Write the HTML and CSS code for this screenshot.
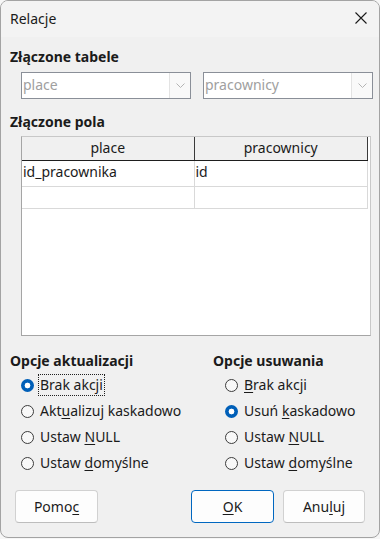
FILE: index.html
```html
<!DOCTYPE html>
<html lang="pl">
<head>
<meta charset="utf-8">
<title>Relacje</title>
<link rel="stylesheet" href="styles.css">
</head>
<body>
<div class="window">
  <div class="titlebar">
    <span class="title">Relacje</span>
    <svg class="close" width="12" height="12" viewBox="0 0 12 12"><path d="M0.5 0.5 L11.5 11.5 M11.5 0.5 L0.5 11.5" stroke="#1a1a1a" stroke-width="1.1" fill="none"/></svg>
  </div>
  <div class="content">
    <div class="heading">Złączone tabele</div>
    <div class="combos">
      <div class="combo"><span class="combo-text">place</span><span class="combo-btn"><svg width="9" height="5" viewBox="0 0 9 5"><path d="M0.5 0.5 L4.5 4.5 L8.5 0.5" stroke="#b4b4b4" fill="none"/></svg></span></div>
      <div class="combo"><span class="combo-text">pracownicy</span><span class="combo-btn"><svg width="9" height="5" viewBox="0 0 9 5"><path d="M0.5 0.5 L4.5 4.5 L8.5 0.5" stroke="#b4b4b4" fill="none"/></svg></span></div>
    </div>
    <div class="heading heading-fields">Złączone pola</div>
    <div class="grid">
      <div class="grid-head">
        <div class="hcell">place</div>
        <div class="hcell">pracownicy</div>
      </div>
      <div class="grid-row row-first">
        <div class="cell">id_pracownika</div>
        <div class="cell">id</div>
      </div>
      <div class="grid-row row-second">
        <div class="cell"></div>
        <div class="cell"></div>
      </div>
    </div>
    <div class="options">
      <div class="group">
        <div class="heading group-title">Opcje aktualizacji</div>
        <div class="radio"><span class="dot on"></span><span class="label focus">Brak akcji</span></div>
        <div class="radio"><span class="dot"></span><span class="label">Akt<u>u</u>alizuj kaskadowo</span></div>
        <div class="radio"><span class="dot"></span><span class="label">Ustaw <u>N</u>ULL</span></div>
        <div class="radio"><span class="dot"></span><span class="label">Ustaw <u>d</u>omyślne</span></div>
      </div>
      <div class="group group-right">
        <div class="heading group-title">Opcje usuwania</div>
        <div class="radio"><span class="dot"></span><span class="label"><u>B</u>rak akcji</span></div>
        <div class="radio"><span class="dot on"></span><span class="label">Usuń <u>k</u>askadowo</span></div>
        <div class="radio"><span class="dot"></span><span class="label">Ustaw <u>N</u>ULL</span></div>
        <div class="radio"><span class="dot"></span><span class="label">Ustaw <u>d</u>omyślne</span></div>
      </div>
    </div>
    <div class="buttons">
      <button class="btn">Pomo<u>c</u></button>
      <span class="spacer"></span>
      <button class="btn btn-default"><u>O</u>K</button>
      <button class="btn">Anu<u>l</u>uj</button>
    </div>
  </div>
</div>
</body>
</html>
```

FILE: styles.css
```css
html, body {
  margin: 0;
  padding: 0;
  background: #f6f6f6;
}
body {
  font-family: "Noto Sans", "Open Sans", sans-serif;
  font-size: 14px;
  color: #1b1b1b;
}
.window {
  box-sizing: border-box;
  width: 380px;
  height: 538px;
  border: 1px solid #a3a3a3;
  border-radius: 8px;
  overflow: hidden;
  background: #f0f0f0;
  display: flex;
  flex-direction: column;
}
.titlebar {
  height: 36px;
  flex: none;
  background: #f3f3f3;
  display: flex;
  align-items: center;
  padding: 0 6px 0 9px;
}
.title {
  flex: 1;
  font-size: 14px;
  line-height: 20px;
  margin-top: 0;
}
.close {
  margin-right: 6px;
  margin-top: -2px;
}
.content {
  flex: 1;
  padding: 10px 0 0 9px;
  display: flex;
  flex-direction: column;
}
.heading {
  font-weight: bold;
  line-height: 20px;
  height: 20px;
}
.combos {
  display: flex;
  gap: 12px;
  margin: 5px 0 0 11px;
}
.combo {
  box-sizing: border-box;
  width: 170px;
  height: 27px;
  border: 1px solid #8a8f98;
  background: #ffffff;
  display: flex;
  align-items: center;
}
.combo-text {
  flex: 1;
  color: #a0a0a0;
  padding-left: 1px;
  line-height: 20px;
  margin-top: -1px;
}
.combo-btn {
  box-sizing: border-box;
  width: 21px;
  height: 25px;
  background: #f9f9f9;
  border-left: 1px solid #e3e3e3;
  display: flex;
  align-items: center;
  justify-content: center;
}
.heading-fields {
  margin-top: 13px;
}
.grid {
  box-sizing: border-box;
  width: 350px;
  height: 200px;
  margin: 4px 0 0 11px;
  border: 1px solid #a5a5a5;
  border-top-color: #c8c8c8;
  border-right-color: #c8c8c8;
  background: #ffffff;
  padding-right: 2px;
}
.grid-head {
  display: flex;
  height: 23px;
  background: #f0f0f0;
  border-bottom: 1px solid #1e1e1e;
}
.hcell {
  box-sizing: border-box;
  line-height: 22px;
  text-align: center;
  border-right: 1px solid #3a3a3a;
}
.hcell:first-child, .cell:first-child {
  width: 173px;
}
.hcell:last-child, .cell:last-child {
  width: 174px;
}
.grid-row {
  display: flex;
  border-bottom: 1px solid #d9d9d9;
}
.row-first { height: 25px; }
.row-second { height: 21px; }
.cell {
  box-sizing: border-box;
  line-height: 22px;
  padding-left: 1px;
  border-right: 1px solid #d9d9d9;
}
.options {
  display: flex;
  margin-top: 15px;
}
.group-title {
  margin-bottom: 1px;
}
.group {
  width: 203px;
}
.group-right {
  width: auto;
}
.radio {
  height: 26px;
  display: flex;
  align-items: center;
  padding-left: 11px;
}
.group-right .radio {
  padding-left: 12px;
}
.dot {
  box-sizing: border-box;
  width: 13px;
  height: 13px;
  border-radius: 50%;
  border: 1px solid #3c3c3c;
  background: #f8f8f8;
  margin-right: 4px;
  flex: none;
}
.dot.on {
  border: none;
  background: radial-gradient(circle, #ffffff 0 2.6px, #005fb8 3.2px);
}
.label {
  line-height: 20px;
  padding: 0 1px;
  border: 1px solid transparent;
}
.label.focus {
  border: 1px dotted #202020;
}
u {
  text-underline-offset: 2px;
}
.buttons {
  display: flex;
  align-items: center;
  gap: 9px;
  margin-top: 14px;
  padding-left: 5px;
}
.spacer {
  flex: 1;
}
.btn {
  box-sizing: border-box;
  font-family: inherit;
  font-size: 14px;
  color: #1b1b1b;
  width: 83px;
  height: 33px;
  border: 1px solid #d1d1d1;
  border-bottom-color: #bdbdbd;
  border-radius: 4px;
  background: #fdfdfd;
  padding: 0;
}
.btn:last-child {
  width: 82px;
  margin-right: 14px;
}
.btn-default {
  border: 1px solid #0067c0;
}
```
